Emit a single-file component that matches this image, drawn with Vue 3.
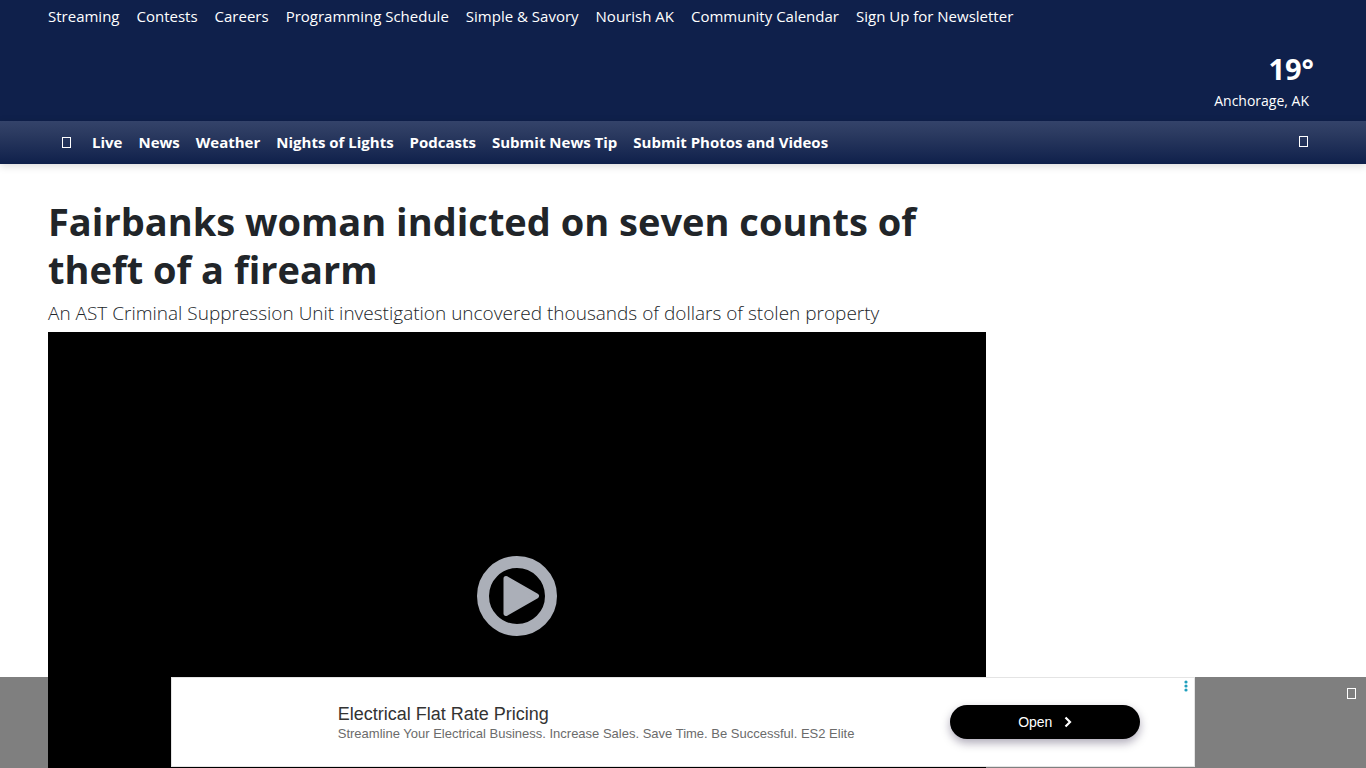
<script setup>
const topLinks = [
  'Streaming', 'Contests', 'Careers', 'Programming Schedule',
  'Simple & Savory', 'Nourish AK', 'Community Calendar', 'Sign Up for Newsletter',
]
const navLinks = [
  'Live', 'News', 'Weather', 'Nights of Lights', 'Podcasts',
  'Submit News Tip', 'Submit Photos and Videos',
]
</script>

<template>
  <div class="page">
    <header class="masthead">
      <nav class="top-links" aria-label="Quick links">
        <a v-for="link in topLinks" :key="link" href="#">{{ link }}</a>
      </nav>
      <a class="weather" href="#">
        <span class="temp">19°</span>
        <span class="place">Anchorage, AK</span>
      </a>
    </header>

    <nav class="main-nav" aria-label="Sections">
      <button class="icon-button" type="button" aria-label="Menu"><span class="box"></span></button>
      <a v-for="link in navLinks" :key="link" href="#">{{ link }}</a>
      <button class="icon-button search" type="button" aria-label="Search"><span class="box"></span></button>
    </nav>

    <main class="content">
      <article>
        <h1>Fairbanks woman indicted on seven counts of theft of a firearm</h1>
        <p class="deck">An AST Criminal Suppression Unit investigation uncovered thousands of dollars of stolen property</p>
        <div class="video">
          <button class="play" type="button" aria-label="Play video">
            <svg viewBox="0 0 80 80" width="80" height="80">
              <circle cx="40" cy="40" r="34" fill="none" stroke="#abafb8" stroke-width="12" />
              <path d="M29 22.500L59.500 40L29 57.500Z" fill="#abafb8" stroke="#abafb8" stroke-width="5" stroke-linejoin="round" />
            </svg>
          </button>
        </div>
      </article>
    </main>

    <aside class="ad-bar" aria-label="Advertisement">
      <div class="ad">
        <div class="ad-copy">
          <a class="ad-title" href="#">Electrical Flat Rate Pricing</a>
          <a class="ad-text" href="#">Streamline Your Electrical Business. Increase Sales. Save Time. Be Successful. ES2 Elite</a>
        </div>
        <button class="open" type="button">
          Open
          <svg viewBox="0 0 8 12" width="8" height="12">
            <path d="M1.500 1.500L6 6L1.500 10.500" fill="none" stroke="#fff" stroke-width="2.200" />
          </svg>
        </button>
        <button class="ad-options" type="button" aria-label="Ad options">
          <svg viewBox="0 0 4 12" width="4" height="12" fill="#1f9fbd">
            <circle cx="2" cy="2" r="1.600" />
            <circle cx="2" cy="6" r="1.600" />
            <circle cx="2" cy="10" r="1.600" />
          </svg>
        </button>
      </div>
      <button class="close" type="button" aria-label="Close"><span class="box"></span></button>
    </aside>
  </div>
</template>

<style>
html {
  scrollbar-width: none;
}
body {
  margin: 0;
  background: #fff;
}
</style>

<style scoped>
.page {
  font-family: "Segoe UI", "Open Sans", "Noto Sans", sans-serif;
  color: #212529;
}
a {
  color: inherit;
  text-decoration: none;
}
button {
  border: 0;
  padding: 0;
  background: none;
  color: inherit;
  font: inherit;
  cursor: pointer;
}
svg {
  display: block;
}
.masthead {
  display: flex;
  flex-direction: column;
  gap: 16px;
  padding: 4px 48px 12px;
  background: #0f204b;
  color: #fff;
}
.top-links {
  display: flex;
  gap: 17px;
  font-size: 15px;
  line-height: 25px;
  white-space: nowrap;
}
.weather {
  display: flex;
  flex-direction: column;
  align-self: flex-end;
  align-items: flex-end;
}
.temp {
  margin-right: 4px;
  font-size: 29px;
  line-height: 48px;
  font-weight: 700;
}
.place {
  margin-right: 9px;
  font-size: 14px;
  line-height: 16px;
}
.main-nav {
  position: relative;
  display: flex;
  align-items: center;
  gap: 16px;
  padding: 0 48px;
  background: linear-gradient(#34436a, #2b3a60 30%, #0f204b);
  box-shadow: 0 2px 8px rgba(0, 0, 0, 0.15);
  color: #fff;
  font-size: 15px;
  font-weight: 700;
  line-height: 43px;
  white-space: nowrap;
}
.box {
  display: block;
  width: 9px;
  height: 11px;
  box-sizing: border-box;
  border: 1px solid #fff;
}
.icon-button {
  padding: 8px 5px 8px 14px;
}
.search {
  margin-left: auto;
  padding: 8px 10px 10px 8px;
}
.content {
  display: grid;
  grid-template-columns: minmax(0, 1fr) 300px;
  gap: 32px;
  padding: 33px 48px 0;
}
h1 {
  margin: 0;
  font-size: 38px;
  line-height: 48px;
  font-weight: 700;
}
.deck {
  margin: 9px 0 8px;
  font-size: 19px;
  line-height: 22px;
  font-weight: 300;
}
.video {
  display: flex;
  align-items: center;
  justify-content: center;
  aspect-ratio: 16 / 9;
  background: #000;
}
.ad-bar {
  position: fixed;
  left: 0;
  right: 0;
  bottom: 0;
  display: flex;
  justify-content: center;
  background: rgba(0, 0, 0, 0.5);
  color: #fff;
}
.ad {
  position: relative;
  display: flex;
  align-items: center;
  justify-content: space-between;
  width: 75%;
  height: 90px;
  margin-bottom: 1px;
  padding: 0 54px 0 166px;
  box-sizing: border-box;
  border: 1px solid #e4e4e4;
  background: #fff;
  font-family: "Liberation Sans", Arial, sans-serif;
}
.ad-copy {
  display: flex;
  flex-direction: column;
  padding-top: 3px;
  white-space: nowrap;
}
.ad-title {
  color: #333;
  font-size: 18px;
  line-height: 20px;
}
.ad-text {
  color: #6b6b6b;
  font-size: 13px;
  line-height: 20px;
}
.open {
  display: flex;
  align-items: center;
  justify-content: center;
  gap: 12px;
  width: 190px;
  height: 34px;
  border-radius: 17px;
  background: #000;
  box-shadow: 0 4px 10px rgba(20, 10, 50, 0.35);
  color: #fff;
  font-size: 14px;
}
.ad-options {
  position: absolute;
  top: 2px;
  right: 6px;
}
.close {
  position: absolute;
  top: 11px;
  right: 10px;
}
</style>
